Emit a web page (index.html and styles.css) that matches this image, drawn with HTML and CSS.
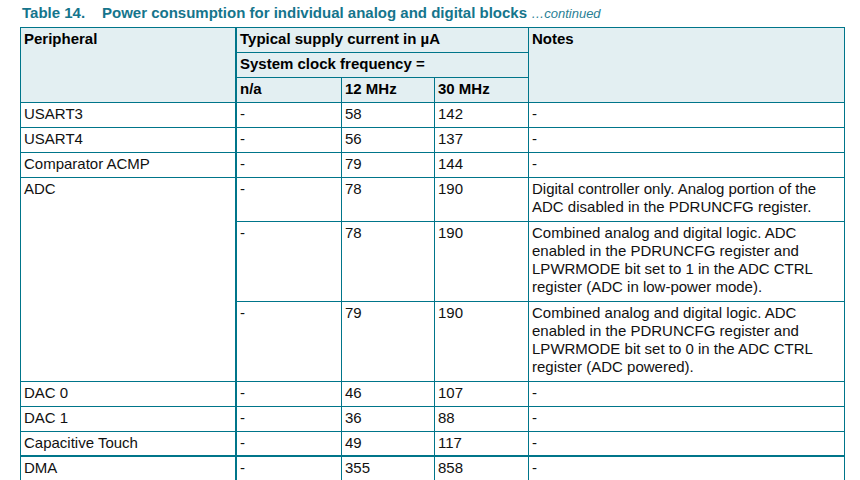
FILE: index.html
```html
<!DOCTYPE html>
<html>
<head>
<meta charset="utf-8">
<link rel="stylesheet" href="styles.css">
</head>
<body>
<div class="page">
  <div class="caption"><span class="num">Table 14.</span>Power consumption for individual analog and digital blocks <span class="cont">…continued</span></div>
  <table class="tbl">
    <colgroup>
      <col class="c-per"><col class="c-na"><col class="c-12"><col class="c-30"><col class="c-notes">
    </colgroup>
    <thead>
      <tr class="row"><th rowspan="3" class="per">Peripheral</th><th colspan="3">Typical supply current in µA</th><th rowspan="3">Notes</th></tr>
      <tr class="row"><th colspan="3">System clock frequency =</th></tr>
      <tr class="row"><th>n/a</th><th>12 MHz</th><th>30 MHz</th></tr>
    </thead>
    <tbody>
      <tr class="row"><td class="per">USART3</td><td>-</td><td>58</td><td>142</td><td>-</td></tr>
      <tr class="row"><td class="per">USART4</td><td>-</td><td>56</td><td>137</td><td>-</td></tr>
      <tr class="row"><td class="per">Comparator ACMP</td><td>-</td><td>79</td><td>144</td><td>-</td></tr>
      <tr class="row2"><td class="per" rowspan="3">ADC</td><td>-</td><td>78</td><td>190</td><td>Digital controller only. Analog portion of the ADC disabled in the PDRUNCFG register.</td></tr>
      <tr class="row4"><td>-</td><td>78</td><td>190</td><td>Combined analog and digital logic. ADC enabled in the PDRUNCFG register and LPWRMODE bit set to 1 in the ADC CTRL register (ADC in low-power mode).</td></tr>
      <tr class="row4"><td>-</td><td>79</td><td>190</td><td>Combined analog and digital logic. ADC enabled in the PDRUNCFG register and LPWRMODE bit set to 0 in the ADC CTRL register (ADC powered).</td></tr>
      <tr class="row"><td class="per">DAC 0</td><td>-</td><td>46</td><td>107</td><td>-</td></tr>
      <tr class="row"><td class="per">DAC 1</td><td>-</td><td>36</td><td>88</td><td>-</td></tr>
      <tr class="row sep"><td class="per">Capacitive Touch</td><td>-</td><td>49</td><td>117</td><td>-</td></tr>
      <tr class="row"><td class="per">DMA</td><td>-</td><td>355</td><td>858</td><td>-</td></tr>
    </tbody>
  </table>
</div>
</body>
</html>
```
FILE: styles.css
```css
html, body {
  margin: 0;
  padding: 0;
  background: #ffffff;
}
.page {
  padding: 4px 0 0 20px;
  font-family: "Liberation Sans", Arial, sans-serif;
  color: #111111;
}
.caption {
  font-size: 15px;
  line-height: 18px;
  font-weight: bold;
  color: #15758c;
  padding-left: 2px;
  white-space: nowrap;
}
.caption .num {
  display: inline-block;
  width: 80px;
}
.caption .cont {
  font-size: 13px;
  font-weight: normal;
  font-style: italic;
  color: #2a7f95;
}
.tbl {
  margin-top: 4px;
  border-collapse: separate;
  border-spacing: 0;
  table-layout: fixed;
  width: 825px;
  border-left: 1px solid #00758a;
  border-top: 1px solid #00758a;
  font-size: 15px;
  line-height: 18px;
}
.c-per { width: 216px; }
.c-na { width: 105px; }
.c-12 { width: 93px; }
.c-30 { width: 94px; }
.c-notes { width: 316px; }
.tbl th, .tbl td {
  box-sizing: border-box;
  border-right: 1px solid #00758a;
  border-bottom: 1px solid #00758a;
  padding: 2px 3px 0 3px;
  vertical-align: top;
  text-align: left;
}
.tbl th {
  background: #e3eff2;
  font-weight: bold;
  color: #000000;
}
.tbl td {
  font-weight: normal;
}
.tbl .per {
  border-right-width: 2px;
}
.row { height: 25px; }
.row2 { height: 44px; }
.row4 { height: 80px; }
.sep td { border-bottom-width: 2px; }
```
